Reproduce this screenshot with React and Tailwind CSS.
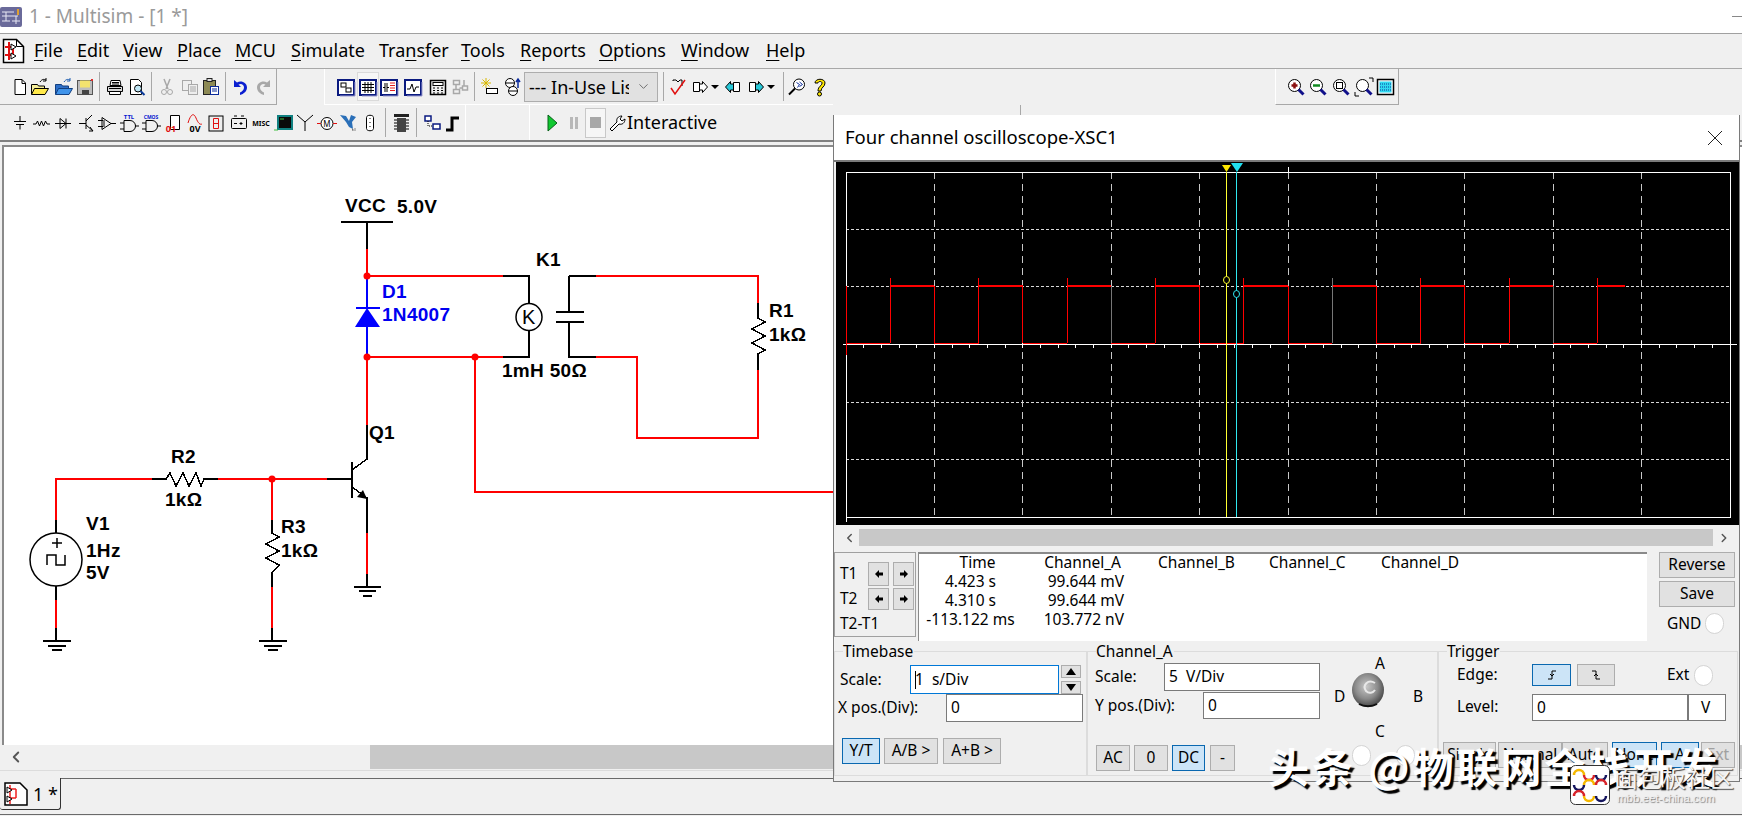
import React from "react";
import { ChevronDown, ChevronLeft, ChevronRight } from "lucide-react";

// small wrapper for the 20px toolbar pictures
function Ic({ className = "", children }) {
  return (
    <svg viewBox="0 0 20 20" className={`w-5 h-5 shrink-0 block ${className}`}>
      {children}
    </svg>
  );
}

const Sep = ({ className = "" }) => <div className={`w-px h-[29px] bg-[#a8a8a8] shrink-0 ${className}`} />;
const Drop = ({ className = "" }) => (
  <svg viewBox="0 0 8 4" className={`w-2 h-1 shrink-0 ${className}`}>
    <path d="M0 0H8L4 4z" fill="#000" />
  </svg>
);

const line = { fill: "none", stroke: "#000", strokeWidth: 1 };

const NewDoc = ({ className }) => (
  <Ic className={className}><path d="M5 2.5h7l3.5 3.5v11.5H5z" fill="#fff" stroke="#000" /><path d="M12 2.5v4h3.5" {...line} /></Ic>
);
const OpenYellow = ({ className }) => (
  <Ic className={className}>
    <path d="M1.5 7.5h6l1 1.5h6v8h-13z" fill="#f5ee9a" stroke="#000" />
    <path d="M1.5 17.5l3-6h14l-3.5 6z" fill="#ffe94a" stroke="#000" />
    <path d="M10 5c2-3 4-3 6-2M16 1v3h-3" fill="none" stroke="#000" />
  </Ic>
);
const OpenBlue = ({ className }) => (
  <Ic className={className}>
    <path d="M1.5 7.5h6l1 1.5h6v8h-13z" fill="#2d6fc8" stroke="#123f80" />
    <path d="M1.5 17.5l3-6h14l-3.5 6z" fill="#3f93ea" stroke="#123f80" />
    <path d="M10 5c2-3 4-3 6-2M16 1v3h-3" fill="none" stroke="#1c5cb0" />
  </Ic>
);
const Floppy = ({ className }) => (
  <Ic className={className}>
    <rect x="2.5" y="3.5" width="15" height="14" fill="#bdbdbd" stroke="#555" />
    <rect x="5" y="3.5" width="10" height="7" fill="#f3e36f" />
    <rect x="7" y="13" width="7" height="4.5" fill="#444" />
    <rect x="16" y="2" width="2" height="2" fill="#e03030" />
  </Ic>
);
const Printer = ({ className }) => (
  <Ic className={className}>
    <path d="M6 3.5h9l1 5H5z" fill="#fff" stroke="#000" />
    <path d="M2.5 9.5h15v5h-15z" fill="#d8d8d8" stroke="#000" />
    <path d="M4.5 14.5h11v3h-11z" fill="#fff" stroke="#000" />
    <path d="M4 11.5h12M7 5.5h7M7 7h7" stroke="#000" />
  </Ic>
);
const Preview = ({ className }) => (
  <Ic className={className}>
    <path d="M3.5 2.5h8l3 3v12h-11z" fill="#fff" stroke="#000" />
    <circle cx="11" cy="11.5" r="3.5" fill="#bfe6f5" stroke="#000" />
    <path d="M13.5 14l4 4" stroke="#0a3a9a" strokeWidth="2" />
  </Ic>
);
const Cut = ({ className }) => (
  <Ic className={className}>
    <path d="M7 2l4 10M13 2l-4 10" stroke="#a8a8a8" strokeWidth="1.5" />
    <circle cx="7" cy="15" r="2.5" fill="none" stroke="#a8a8a8" />
    <circle cx="13" cy="15" r="2.5" fill="none" stroke="#a8a8a8" />
  </Ic>
);
const Copy = ({ className }) => (
  <Ic className={className}>
    <rect x="2.5" y="3.5" width="9" height="10" fill="#eee" stroke="#a8a8a8" />
    <rect x="8.5" y="7.5" width="9" height="10" fill="#eee" stroke="#a8a8a8" />
    <path d="M10 10h6M10 12h6M10 14h6" stroke="#a8a8a8" />
  </Ic>
);
const Paste = ({ className }) => (
  <Ic className={className}>
    <rect x="2.5" y="3.5" width="12" height="14" fill="#8d8a55" stroke="#222" />
    <rect x="6" y="1.5" width="5" height="3" fill="#ddd" stroke="#222" />
    <rect x="9.5" y="9.5" width="8" height="8" fill="#fff" stroke="#0a2a9a" />
    <path d="M11 12h5M11 14h5" stroke="#0a2a9a" />
  </Ic>
);
const Undo = ({ className, color = "#0b1fd0" }) => (
  <Ic className={className}>
    <path d="M4 3v7h7L8.5 7.5C11 6 14 7.5 14 10.5c0 2.5-2 4-4 5v2.5c4-1 7-4 7-7.5C17 6 11.5 3 7 5.5z" fill={color} />
  </Ic>
);
const Box = ({ className, children }) => (
  <Ic className={className}>
    <rect x="2" y="3" width="16" height="15" fill="#fff" stroke="#0a1a80" strokeWidth="2" />
    <path d="M19 5v14H4" stroke="#9a9ad0" fill="none" />
    {children}
  </Ic>
);

function Row1Icons() {
  return (
    <>
      <NewDoc className="ml-[10px]" />
      <OpenYellow />
      <OpenBlue className="ml-[4px]" />
      <Floppy className="ml-[1px]" />
      <Sep className="ml-[4px]" />
      <Printer className="ml-[5px]" />
      <Preview className="ml-[2px]" />
      <Sep className="ml-[4px]" />
      <Cut className="ml-[5px]" />
      <Copy className="ml-[3px]" />
      <Paste className="ml-[1px]" />
      <Sep className="ml-[4px]" />
      <Undo className="ml-[4px]" />
      <Undo className="ml-[4px] -scale-x-100" color="#a8a8a8" />
    </>
  );
}

function Row1Middle() {
  return (
    <>
      <Box className="ml-[11px]">
        <rect x="5" y="6" width="5" height="4" fill="#fff" stroke="#000" />
        <rect x="10" y="11" width="5" height="4" fill="#fff" stroke="#000" />
      </Box>
      <div className="ml-[1px] w-[22px] h-[29px] border border-[#dadada] bg-[#f6f6f6] flex items-center justify-center shrink-0">
        <Box>
          <path d="M4 7.5h12M4 10.5h12M4 13.5h12M7 5v11M10 5v11M13 5v11" stroke="#000" />
        </Box>
      </div>
      <Box>
        <path d="M6 6v9M8 6v9M4 10.5h2M8 10.5h2" stroke="#000" />
        <path d="M11 6h5M11 8.5h5M11 11h5M11 13.5h5" stroke="#e02020" />
      </Box>
      <Box className="ml-[4px]">
        <path d="M4 12h3l2-5 2 8 2-5h3" fill="none" stroke="#000" />
      </Box>
      <Ic className="ml-[5px]">
        <rect x="2.5" y="3.5" width="15" height="14" fill="#eee" stroke="#000" strokeWidth="1.5" />
        <rect x="5" y="5.5" width="10" height="3" fill="#fff" stroke="#000" />
        <path d="M5 11h2M9 11h2M13 11h2M5 13.5h2M9 13.5h2M13 13.5h2M5 16h2M9 16h2M13 16h2" stroke="#000" />
      </Ic>
      <Ic className="ml-[2px]">
        <path d="M3.5 3.5h6v4h-6zM3.5 12.5h6v4h-6zM12.5 9h5v4h-5zM6 7.5v5M9.5 11h3M14 3v6" fill="none" stroke="#a8a8a8" strokeWidth="1.5" />
      </Ic>
      <Sep className="ml-[4px]" />
      <Ic className="ml-[5px]">
        <path d="M6 1v10M1 6h10M2.5 2.5l7 7M9.5 2.5l-7 7" stroke="#d8b800" />
        <rect x="6.5" y="11.5" width="11" height="5" fill="#fff" stroke="#000" />
      </Ic>
      <Ic className="ml-[3px]">
        <circle cx="7" cy="6" r="4.5" fill="#fff" stroke="#000" />
        <circle cx="10" cy="14" r="4.5" fill="#fff" stroke="#000" />
        <path d="M3 6h8M6 14h8" stroke="#000" />
        <path d="M15 11V3M13 5l2-3 2 3" fill="none" stroke="#0a2a9a" strokeWidth="1.5" />
      </Ic>
      <div className="ml-[1px] w-[134px] h-[30px] bg-[#e1e1e1] border border-[#adadad] flex items-center pl-[4px] shrink-0">
        <span className="w-[100px] overflow-hidden whitespace-nowrap text-[18px] leading-none">--- In-Use Lis</span>
        <ChevronDown size={15} strokeWidth={1.5} className="ml-[7px] text-[#666]" />
      </div>
      <Sep className="ml-[5px]" />
      <Ic className="ml-[4px]">
        <path d="M5 4V3h3l2 2 2-2h2v6" fill="none" stroke="#000" />
        <path d="M3 11l4 6L17 3" fill="none" stroke="#e01010" strokeWidth="1.5" />
      </Ic>
      <Ic className="ml-[2px]">
        <path d="M3.5 5.5h6v9h-6z" fill="#fff" stroke="#000" />
        <path d="M9.5 7h3V4.5l5 5.5-5 5.5V13h-3z" fill="#fff" stroke="#000" />
      </Ic>
      <Drop className="ml-[1px]" />
      <Ic className="ml-[4px]">
        <path d="M10.5 5.5h6v9h-6z" fill="#fff" stroke="#000" />
        <path d="M10.5 7h-3V4.5l-5 5.5 5 5.5V13h3z" fill="#28c8d8" stroke="#000" />
      </Ic>
      <Ic className="ml-[3px]">
        <path d="M3.5 5.5h6v9h-6z" fill="#fff" stroke="#000" />
        <path d="M9.5 7h3V4.5l5 5.5-5 5.5V13h-3z" fill="#28c8d8" stroke="#000" />
      </Ic>
      <Drop className="ml-[1px]" />
      <Sep className="ml-[8px]" />
      <Ic className="ml-[3px]">
        <circle cx="12" cy="7.5" r="5.5" fill="#fff" stroke="#000" />
        <path d="M9.5 5.5l3 2-2 3M12.5 5l3 2.5-3 2" fill="none" stroke="#0a2a9a" />
        <path d="M8 11.5l-6 6" stroke="#000" strokeWidth="2" />
      </Ic>
      <Ic className="ml-[3px]">
        <path d="M5 6c0-5 10-5 10 0 0 4-4 4-4 8H8c0-5 4-5 4-8 0-2-4-2-4 0z" fill="#ffe800" stroke="#000" />
        <circle cx="9.5" cy="17" r="2" fill="#ffe800" stroke="#000" />
      </Ic>
    </>
  );
}

function Row2Left() {
  return (
    <>
      <Ic className="ml-[10px]"><path d="M10 3v5M4 8.5h12M6 11.5h8M10 11.5v5" stroke="#000" /></Ic>
      <Ic className="ml-[1px]"><path d="M2 11h3l1.5-3 2 5 2-5 2 5 2-5 1.5 3h3" {...line} /></Ic>
      <Ic className="ml-[2px]"><path d="M2 10.5h16M7 5.5l6 5-6 5zM13 5.5v10" {...line} /></Ic>
      <Ic className="ml-[4px]"><path d="M2 10.5h7M9 5v11M15 2L9 8M9 12l7 6M13 14l3 4-4 0" {...line} /></Ic>
      <Ic><path d="M1 7.5h5M1 13.5h5M5 4.5v12l9-6zM14 10.5h5M7 7v7" {...line} /></Ic>
      <Ic className="ml-[2px]">
        <text x="10" y="6" textAnchor="middle" className="text-[6px] font-bold fill-[#0a1ad0]">TTL</text>
        <path d="M1 10h4M1 16h4M5 7.5h6a5.5 5.5 0 0 1 0 11H5zM16 13h4" {...line} />
      </Ic>
      <Ic className="ml-[2px]">
        <text x="10" y="6" textAnchor="middle" className="text-[5px] font-bold fill-[#0a1ad0]">CMOS</text>
        <path d="M1 10h4M1 16h4M5 7.5h6a5.5 5.5 0 0 1 0 11H5zM16 13h4" {...line} />
      </Ic>
      <Ic className="ml-[2px]">
        <path d="M7.5 2.5h9v14h-9z" fill="#fff" stroke="#000" />
        <text x="8" y="19" textAnchor="middle" className="text-[9px] font-bold fill-[#e01010]">01</text>
      </Ic>
      <Ic className="ml-[2px]">
        <path d="M3 10C6 0 9 0 11 5c2 5 4 7 6 6" fill="none" stroke="#e01010" />
        <text x="10" y="19" textAnchor="middle" className="text-[9px] font-bold fill-black">0V</text>
      </Ic>
      <Ic className="ml-[1px]">
        <rect x="3" y="3" width="14" height="15" fill="#eee" stroke="#000" />
        <path d="M7.5 5.5h5v10h-5zM7.5 10.5h5" fill="none" stroke="#e01010" />
      </Ic>
      <Ic className="ml-[3px]">
        <rect x="2.5" y="5.5" width="15" height="10" rx="1" fill="#eee" stroke="#000" />
        <path d="M5 3h3M12 3h3M5 10.5h3M12 9v3M10.5 10.5h3" stroke="#000" />
      </Ic>
      <Ic className="ml-[2px]">
        <text x="10" y="13" textAnchor="middle" className="text-[7px] font-bold fill-black">MISC</text>
      </Ic>
      <Ic className="ml-[3px]">
        <rect x="4" y="3" width="14" height="13" fill="#0a0a0a" stroke="#108080" strokeWidth="2" />
        <path d="M6 6h4M0 17h4" stroke="#40c040" />
      </Ic>
      <Ic className="ml-[1px]"><path d="M10 9v9M2 2l8 7 8-7" {...line} /></Ic>
      <Ic className="ml-[2px]">
        <circle cx="10" cy="10.5" r="6" fill="#fff" stroke="#000" />
        <text x="10" y="13.5" textAnchor="middle" className="text-[8px] fill-black">M</text>
        <path d="M0 10.5h4M16 10.5h4" stroke="#e01010" />
      </Ic>
      <Ic className="ml-[2px]">
        <path d="M1 2l6 1 3 5 2-6 5 2-4 5 1 7-4-2-3-5z" fill="#2a6fb8" />
        <path d="M13 16h1v2M16 15v3" stroke="#888" />
      </Ic>
      <Ic className="ml-[1px]">
        <path d="M6.5 4.5c0-3 7-3 7 0v11c0 3-7 3-7 0z" fill="#fff" stroke="#000" />
        <path d="M10 5v1M10 9v1M10 13v1" stroke="#000" />
      </Ic>
      <Sep className="ml-[5px]" />
      <Ic className="ml-[5px]">
        <rect x="6" y="5" width="9" height="14" fill="#444" />
        <path d="M3 7h3M3 10h3M3 13h3M3 16h3M15 7h3M15 10h3M15 13h3M15 16h3" stroke="#000" />
        <rect x="3" y="1" width="15" height="3" fill="#222" />
      </Ic>
      <Sep className="ml-[5px]" />
      <Ic className="ml-[5px]">
        <rect x="3" y="3" width="6" height="5" fill="#fff" stroke="#0a1a80" strokeWidth="1.5" />
        <rect x="11" y="11" width="7" height="5" fill="#fff" stroke="#0a1a80" strokeWidth="1.5" />
        <path d="M6 8v5h5" fill="none" stroke="#000" strokeDasharray="1 1" />
      </Ic>
      <Ic className="ml-[1px]"><path d="M3 17h6V5h7" fill="none" stroke="#000" strokeWidth="3" /></Ic>
    </>
  );
}

function Row2Sim() {
  return (
    <>
      <Ic className="ml-[12px]"><path d="M6 2l9 8-9 8z" fill="#10c830" stroke="#066018" /></Ic>
      <Ic className="ml-[2px]"><path d="M6 4h3v12H6zM11 4h3v12h-3z" fill="#b8b8b8" /></Ic>
      <div className="ml-[1px] w-[21px] h-[30px] border border-[#c8c8c8] bg-[#f6f6f6] flex items-center justify-center shrink-0">
        <div className="w-[11px] h-[11px] bg-[#a8a8a8]" />
      </div>
      <svg viewBox="0 0 18 20" className="w-[18px] h-5 ml-[2px] shrink-0">
        <path d="M2 16l7-7c-1-3 1-6 5-6l-2 3 2 2 3-2c0 4-3 6-6 5l-7 7z" fill="#fff" stroke="#000" />
      </svg>
      <span className="ml-[1px] -mt-[2px] text-[18px] leading-none whitespace-nowrap">Interactive</span>
    </>
  );
}

function ZoomGlass({ children }) {
  return (
    <Ic>
      <circle cx="8.5" cy="8.5" r="6" fill="#fff" stroke="#000" />
      {children}
      <path d="M12.5 12.5l5 5" stroke="#10108a" strokeWidth="3" />
    </Ic>
  );
}

const menus = [
  ["", "F", "ile", "w-[43px]"],
  ["", "E", "dit", "w-[46px]"],
  ["", "V", "iew", "w-[54px]"],
  ["", "P", "lace", "w-[58px]"],
  ["", "M", "CU", "w-[56px]"],
  ["", "S", "imulate", "w-[88px]"],
  ["Tra", "n", "sfer", "w-[82px]"],
  ["", "T", "ools", "w-[59px]"],
  ["", "R", "eports", "w-[79px]"],
  ["", "O", "ptions", "w-[82px]"],
  ["", "W", "indow", "w-[85px]"],
  ["", "H", "elp", "w-[40px]"],
];

function Schematic() {
  const red =
    "M367 249V276H503M596 276H758V303M758 370V438H637V357H596M367 357H503M475 357V492H834M367 357V425M367 533V574M218 479H327M56 520V479H152M272 479V520M56 600V628M272 587V628";
  const black =
    "M341 222H393M367 222V249M503 276H529V304M529 331V357H503M569 276H596M569 276V312M556 312H584M556 322H584M569 322V357H596M758 303V318L765 322L752 329L765 336L752 343L765 350L758 354V370M367 425V459L352 470M352 462V498M352 487L367 498V533M327 479H352M367 574V587M354 587H381M359 591H376M363 596H372M152 479H166L170 473L176 486L183 473L189 486L196 473L201 486L204 479H218M56 520V533M56 586V600M56 628V641M43 641H71M48 646H66M52 650H62M272 520V533L279 537L266 544L279 551L266 558L279 565L272 573V587M272 628V641M259 641H287M264 646H282M268 650H278";
  const labels = [
    ["VCC", 345, 212],
    ["5.0V", 397, 213],
    ["K1", 536, 266],
    ["1mH 50Ω", 502, 377],
    ["R1", 769, 317],
    ["1kΩ", 769, 341],
    ["Q1", 369, 439],
    ["R2", 171, 463],
    ["1kΩ", 165, 506],
    ["V1", 86, 530],
    ["1Hz", 86, 557],
    ["5V", 86, 579],
    ["R3", 281, 533],
    ["1kΩ", 281, 557],
  ];
  return (
    <svg viewBox="4 147 831 598" className="w-[831px] h-[598px] block">
      <g shapeRendering="crispEdges">
        <path d={red} fill="none" stroke="#f00" strokeWidth="2" />
        <path d={black} fill="none" stroke="#000" strokeWidth="1.5" />
        <path d="M367 276V308M367 327V357M356 308H380" fill="none" stroke="#00f" strokeWidth="2" />
      </g>
      <path d="M367 308L355 327H380z" fill="#00f" />
      <path d="M367 499L357 497L363 490z" fill="#000" />
      <ellipse cx="529" cy="317" rx="13" ry="13.5" fill="#fff" stroke="#000" strokeWidth="1.5" />
      <ellipse cx="56" cy="559.5" rx="26" ry="26.5" fill="none" stroke="#000" strokeWidth="1.5" />
      <path d="M52 543H62M57 538V548M47 565V555H56V565H65V555" fill="none" stroke="#000" strokeWidth="1.5" />
      <text x="522" y="324" className="text-[20px] fill-black font-['Liberation_Sans',sans-serif]">K</text>
      {[[367, 276], [367, 357], [475, 357], [272, 479]].map(([x, y]) => (
        <circle key={`${x}-${y}`} cx={x} cy={y} r="3.5" fill="#f00" />
      ))}
      {labels.map(([t, x, y]) => (
        <text key={`${t}-${x}`} x={x} y={y} className="text-[19px] tracking-[0.3px] font-bold fill-black font-['Liberation_Sans',sans-serif]">
          {t}
        </text>
      ))}
      <text x="382" y="298" className="text-[19px] tracking-[0.3px] font-bold fill-[#0000f0] font-['Liberation_Sans',sans-serif]">D1</text>
      <text x="382" y="321" className="text-[19px] tracking-[0.3px] font-bold fill-[#0000f0] font-['Liberation_Sans',sans-serif]">1N4007</text>
    </svg>
  );
}

function ScopeScreen() {
  const verts = [934.4, 1022.8, 1111.2, 1199.6, 1288, 1376.4, 1464.8, 1553.2, 1641.6];
  const horiz = [229, 286, 402, 459];
  const ticks = Array.from({ length: 51 }, (_, i) => 846 + i * 17.68);
  const rises = [890.2, 978.6, 1067, 1155.4, 1243.8, 1332.2, 1420.6, 1509, 1597.4];
  const falls = [934.4, 1022.8, 1111.2, 1199.6, 1288, 1376.4, 1464.8, 1553.2];
  const dimmed = [1111.2, 1332.2, 1553.2];
  const tone = (x) => (dimmed.includes(x) ? "#777" : "#f00");
  return (
    <svg viewBox="836 162 903 363" className="w-[903px] h-[363px] block">
      <rect x="836" y="162" width="903" height="363" fill="#000" />
      <g shapeRendering="crispEdges">
        {verts.map((x) => (
          <path key={x} d={`M${x} 172V517`} stroke="#c8c8c8" strokeDasharray="7 5" />
        ))}
        {horiz.map((y) => (
          <path key={y} d={`M846 ${y}H1730`} stroke="#d8d8d8" strokeDasharray="3 2" />
        ))}
        <rect x="846.5" y="172.5" width="883.5" height="344.5" fill="none" stroke="#fff" />
        <path d="M1288 167V172M846 517V522" stroke="#fff" />
        <path d="M843 344.5H1737" stroke="#fff" />
        {ticks.map((x, i) => (
          <path key={x} d={`M${x} ${i % 5 === 0 ? 341 : 344}V348`} stroke="#fff" />
        ))}
        {/* low and high stretches of the square wave */}
        {rises.map((x, i) => (
          <path key={x} d={`M${i === 0 ? 846 : falls[i - 1]} 343H${x}`} stroke="#f00" />
        ))}
        {rises.map((x, i) => (
          <path key={x} d={`M${x} 286H${falls[i] || 1625}`} stroke="#f00" strokeWidth="2" />
        ))}
        {rises.map((x) => (
          <path key={x} d={`M${x} 278V343`} stroke={tone(x)} />
        ))}
        {falls.map((x) => (
          <path key={x} d={`M${x} 286V343`} stroke={tone(x)} />
        ))}
        <path d="M846.5 286V355" stroke="#f00" />
        <path d="M1226.5 172V517" stroke="#ffff30" />
        <path d="M1236.5 172V517" stroke="#30e8f0" />
      </g>
      <path d="M1222 165H1231L1226.5 172z" fill="#ffe800" />
      <path d="M1231 163H1243L1237 172z" fill="#20e0f0" />
      <ellipse cx="1226.5" cy="280" rx="3" ry="3.5" fill="#000" stroke="#ffff30" />
      <ellipse cx="1236.5" cy="294" rx="3" ry="3.5" fill="#000" stroke="#30e8f0" />
    </svg>
  );
}

function Btn({ children, className = "", active, dim }) {
  return (
    <div
      className={`flex items-center justify-center shrink-0 border text-[15.5px] leading-none ${
        active ? "bg-[#cce4f7] border-[#0a68b0]" : "bg-[#e1e1e1] border-[#adadad]"
      } ${dim ? "text-[#a0a0a0]" : "text-black"} ${className}`}
    >
      {children}
    </div>
  );
}

function Field({ children, className = "" }) {
  return (
    <div className={`bg-white border border-[#7a7a7a] flex items-center pl-[4px] text-[15.5px] leading-none whitespace-pre shrink-0 ${className}`}>
      {children}
    </div>
  );
}

const Radio = ({ className = "" }) => (
  <div className={`w-[19px] h-[21px] rounded-full bg-white border border-[#d4d4d4] shrink-0 ${className}`} />
);

const Arrow = ({ flip }) => (
  <svg viewBox="0 0 10 10" className={`w-[10px] h-[10px] ${flip ? "-scale-x-100" : ""}`}>
    <path d="M1 5l4-4v2.5h4v3H5V9z" fill="#000" />
  </svg>
);

function Group({ label, className = "", children }) {
  return (
    <div className={`relative h-[125px] border border-[#dcdcdc] shrink-0 ${className}`}>
      <span className="absolute -top-[11px] left-[8px] bg-[#f0f0f0] leading-[20px] pr-[1px]">{label}</span>
      {children}
    </div>
  );
}

function Knob() {
  return (
    <svg viewBox="0 0 34 36" className="w-[34px] h-[36px] ml-[7px] shrink-0">
      <defs>
        <radialGradient id="knobFill" cx="45%" cy="40%" r="65%">
          <stop offset="0%" stopColor="#c8c8c8" />
          <stop offset="55%" stopColor="#8a8a8a" />
          <stop offset="100%" stopColor="#3a3a3a" />
        </radialGradient>
      </defs>
      <ellipse cx="17" cy="18" rx="16" ry="17" fill="url(#knobFill)" />
      <path d="M24 11c-7-4-13 2-9 8 3 3 7 2 9-1" fill="none" stroke="#e8e8e8" strokeWidth="2" />
      <path d="M8 32c5 3 13 3 18 0" fill="none" stroke="#111" strokeWidth="2" />
    </svg>
  );
}

function Scope() {
  return (
    <div className="absolute left-[833px] top-[115px] w-[907px] h-[667px] bg-[#f0f0f0] border-l border-b border-r border-[#7a7a7a] text-[15.5px]">
      {/* title */}
      <div className="h-[45px] bg-white flex items-center justify-between pl-[11px] pr-[16px]">
        <span className="text-[18.5px] leading-none whitespace-nowrap">Four channel oscilloscope-XSC1</span>
        <svg viewBox="0 0 16 16" className="w-4 h-4">
          <path d="M1 1l14 14M15 1L1 15" stroke="#222" strokeWidth="1" />
        </svg>
      </div>

      {/* screen */}
      <div className="h-[365px] border-t-2 border-[#7a7a7a] pl-[2px]">
        <ScopeScreen />
      </div>

      {/* horizontal scrollbar */}
      <div className="mt-[4px] h-[17px] flex items-center">
        <ChevronLeft size={14} strokeWidth={2.5} className="ml-[6px] w-[19px] text-[#555]" />
        <div className="w-[854px] h-[17px] bg-[#c8c8c8]" />
        <ChevronRight size={14} strokeWidth={2.5} className="ml-[4px] text-[#555]" />
      </div>

      {/* cursors and read-out */}
      <div className="mt-[6px] h-[89px] flex items-start">
        <div className="w-[82px] h-[85px] border border-[#a0a0a0] pl-[5px] pt-[9px] shrink-0">
          <div className="flex items-center h-[24px]">
            <span className="w-[28px]">T1</span>
            <Btn className="w-[21px] h-[24px]"><Arrow /></Btn>
            <Btn className="w-[21px] h-[24px] ml-[4px]"><Arrow flip /></Btn>
          </div>
          <div className="flex items-center h-[22px] mt-[2px]">
            <span className="w-[28px]">T2</span>
            <Btn className="w-[21px] h-[22px]"><Arrow /></Btn>
            <Btn className="w-[21px] h-[22px] ml-[4px]"><Arrow flip /></Btn>
          </div>
          <div className="mt-[3px] h-[20px] leading-[20px] whitespace-nowrap">T2-T1</div>
        </div>

        <div className="ml-[2px] w-[729px] h-[89px] bg-white border-t-2 border-l border-[#8a8a8a] flex leading-[19px] whitespace-nowrap shrink-0">
          <div className="w-[113px] text-center">
            <div className="pl-[4px] -mt-px">Time</div>
            <div className="pr-[10px]">4.423 s</div>
            <div className="pr-[10px]">4.310 s</div>
            <div className="pr-[10px]">-113.122 ms</div>
          </div>
          <div className="w-[95px] text-right">
            <div className="pr-[6px] -mt-px">Channel_A</div>
            <div className="pr-[3px]">99.644 mV</div>
            <div className="pr-[3px]">99.644 mV</div>
            <div className="pr-[3px]">103.772 nV</div>
          </div>
          <div className="w-[111px] pl-[31px] -mt-px">Channel_B</div>
          <div className="w-[112px] pl-[31px] -mt-px">Channel_C</div>
          <div className="pl-[31px] -mt-px">Channel_D</div>
        </div>

        <div className="ml-[12px] w-[76px] shrink-0">
          <Btn className="w-[76px] h-[26px]">Reverse</Btn>
          <Btn className="w-[76px] h-[26px] mt-[3px]">Save</Btn>
          <div className="mt-[5px] flex items-center pl-[8px]">
            <span className="w-[38px]">GND</span>
            <Radio />
          </div>
        </div>
      </div>

      {/* control groups */}
      <div className="mt-[10px] flex">
        <Group label="Timebase" className="w-[253px]">
          <div className="pt-[13px] flex h-[42px] items-center">
            <span className="w-[75px] pl-[5px]">Scale:</span>
            <Field className="w-[149px] h-[29px] border-[#0078d7]">
              <span className="w-px h-[18px] bg-black -mr-px" />1  s/Div
            </Field>
            <div className="ml-[2px] w-[20px] h-[29px] flex flex-col justify-between">
              <Btn className="h-[13px]"><span className="w-0 h-0 border-x-[5px] border-x-transparent border-b-[7px] border-b-black" /></Btn>
              <Btn className="h-[13px]"><span className="w-0 h-0 border-x-[5px] border-x-transparent border-t-[7px] border-t-black" /></Btn>
            </div>
          </div>
          <div className="flex items-center h-[28px]">
            <span className="w-[111px] pl-[3px] whitespace-nowrap">X pos.(Div):</span>
            <Field className="w-[137px] h-[28px]">0</Field>
          </div>
          <div className="mt-[16px] pl-[7px] flex">
            <Btn active className="w-[38px] h-[26px]">Y/T</Btn>
            <Btn className="w-[54px] h-[26px] ml-[4px]">A/B &gt;</Btn>
            <Btn className="w-[58px] h-[26px] ml-[5px]">A+B &gt;</Btn>
          </div>
        </Group>

        <Group label="Channel_A" className="w-[351px] flex">
          <div className="w-[232px] shrink-0">
            <div className="mt-[11px] flex items-center h-[28px]">
              <span className="w-[76px] pl-[7px]">Scale:</span>
              <Field className="w-[156px] h-[28px]">5  V/Div</Field>
            </div>
            <div className="mt-[1px] flex items-center h-[27px]">
              <span className="w-[115px] pl-[7px] whitespace-nowrap">Y pos.(Div):</span>
              <Field className="w-[117px] h-[27px]">0</Field>
            </div>
            <div className="mt-[26px] pl-[8px] flex">
              <Btn className="w-[34px] h-[26px]">AC</Btn>
              <Btn className="w-[34px] h-[26px] ml-[4px]">0</Btn>
              <Btn active className="w-[33px] h-[26px] ml-[4px]">DC</Btn>
              <Btn className="w-[25px] h-[26px] ml-[5px]">-</Btn>
            </div>
          </div>
          <div className="w-[110px] shrink-0">
            <div className="mt-[2px] h-[18px] leading-[18px] ml-[55px]">A</div>
            <div className="flex h-[34px] items-start">
              <span className="ml-[14px] mt-[14px] w-[10px] leading-[20px]">D</span>
              <Knob />
              <span className="ml-[28px] mt-[14px] leading-[20px]">B</span>
            </div>
            <div className="mt-[15px] h-[20px] leading-[20px] ml-[55px]">C</div>
            <div className="mt-[4px] flex ml-[32px]">
              <Radio />
              <Radio className="ml-[25px]" />
            </div>
          </div>
        </Group>

        <Group label="Trigger" className="w-[300px]">
          <div className="mt-[12px] flex items-center h-[22px]">
            <span className="w-[93px] pl-[18px]">Edge:</span>
            <Btn active className="w-[39px] h-[22px]">
              <svg viewBox="0 0 12 12" className="w-3 h-3"><path d="M2 10h4V2h4M6 7L4 5M6 7l2-2" fill="none" stroke="#000" /></svg>
            </Btn>
            <Btn className="w-[38px] h-[22px] ml-[6px]">
              <svg viewBox="0 0 12 12" className="w-3 h-3"><path d="M2 2h4v8h4M6 5L4 7M6 5l2 2" fill="none" stroke="#000" /></svg>
            </Btn>
            <span className="ml-[52px] w-[27px]">Ext</span>
            <Radio />
          </div>
          <div className="mt-[8px] flex items-center h-[27px]">
            <span className="w-[93px] pl-[18px] -mt-[2px]">Level:</span>
            <Field className="w-[156px] h-[27px]">0</Field>
            <Field className="w-[38px] h-[27px] pl-[12px]">V</Field>
          </div>
          <div className="mt-[21px] pl-[4px] flex">
            <Btn className="w-[53px] h-[26px]">Single</Btn>
            <Btn className="w-[64px] h-[26px] ml-[2px]">Normal</Btn>
            <Btn className="w-[46px] h-[26px]">Auto</Btn>
            <Btn active className="w-[45px] h-[26px] ml-[4px]">None</Btn>
            <Btn active className="w-[38px] h-[26px] ml-[4px]">A</Btn>
            <Btn dim className="w-[34px] h-[26px] ml-[2px]">Ext</Btn>
          </div>
        </Group>
      </div>
    </div>
  );
}

function Watermark() {
  const arcs = [
    ["M4 10a5 5 0 0 1 10 0", "#f5b800"],
    ["M14 10a5 5 0 0 0 10 0", "#d8232a"],
    ["M26 10a5 5 0 0 0 10 0", "#15155e"],
    ["M4 20a5 5 0 0 0 10 0", "#15155e"],
    ["M14 20a5 5 0 0 1 10 0", "#f5b800"],
    ["M26 20a5 5 0 0 1 10 0", "#d8232a"],
    ["M4 31a5 5 0 0 1 10 0", "#d8232a"],
    ["M14 31a5 5 0 0 0 10 0", "#f5b800"],
    ["M26 31a5 5 0 0 0 10 0", "#15155e"],
  ];
  return (
    <>
      <div className="absolute left-[1268px] top-[740px] text-[41px] leading-[50px] font-bold tracking-[3px] whitespace-nowrap text-white [text-shadow:3px_3px_1px_#000] font-['Noto_Sans_CJK_SC',sans-serif]">
        头条 @物联网全栈开发
      </div>
      <svg viewBox="0 0 40 40" className="absolute left-[1570px] top-[765px] w-10 h-10">
        <rect x="0.5" y="0.5" width="39" height="39" rx="5" fill="#fff" stroke="#333" />
        {arcs.map(([d, c]) => (
          <path key={d} d={d} fill="none" stroke={c} strokeWidth="2.5" />
        ))}
      </svg>
      <div className="absolute left-[1614px] top-[762px] text-[24px] leading-[30px] whitespace-nowrap text-[#f4f4f4] [text-shadow:1px_1px_1px_#444] font-['Noto_Sans_CJK_SC',sans-serif]">
        面包板社区
      </div>
      <div className="absolute left-[1617px] top-[791px] text-[11.5px] leading-[14px] whitespace-nowrap text-[#f0f0f0] [text-shadow:1px_1px_1px_#777] font-['Liberation_Sans',sans-serif]">
        mbb.eet-china.com
      </div>
    </>
  );
}

export default function App() {
  return (
    <div className="w-[1747px] h-[816px] bg-white overflow-hidden font-['Noto_Sans','Noto_Sans_CJK_SC',sans-serif]">
      <div className="relative w-[1742px] h-[816px] bg-[#f0f0f0] flex flex-col">
        {/* title bar */}
        <div className="h-[34px] shrink-0 bg-white border-b border-[#a0a0a0] flex items-center">
          <svg viewBox="0 0 22 22" className="w-[22px] h-[22px] shrink-0">
            <rect x="0" y="1" width="22" height="20" rx="2" fill="#6a6a9a" />
            <path d="M2 6h12M2 10h16M2 15h8M12 15h8M6 6v9M16 10v8" stroke="#e8e8f4" />
            <path d="M18 3v6" stroke="#e0a030" strokeWidth="2" />
          </svg>
          <span className="ml-[7px] text-[19px] leading-none text-[#9a9a9a] whitespace-nowrap">1 - Multisim - [1 *]</span>
          <div className="ml-auto w-[10px] h-px bg-[#888]" />
        </div>

        {/* menu */}
        <div className="h-[34px] shrink-0 flex items-center">
          <svg viewBox="0 0 24 26" className="ml-[2px] w-6 h-[26px] shrink-0">
            <path d="M1.5 1.5h13l7 7v16h-20z" fill="#fff" stroke="#000" strokeWidth="1.5" />
            <path d="M14.5 1.5v7h7" fill="none" stroke="#000" />
            <path d="M7 4v18M3 9h8M3 17h8M11 9v8" stroke="#e01010" strokeWidth="2" />
            <path d="M9 6l5 3-5 3zM9 15l5 3-5 3z" fill="#fff" stroke="#000" />
          </svg>
          <div className="ml-[8px] -mt-[2px] flex text-[18px] leading-none whitespace-nowrap">
            {menus.map(([pre, key, post, w]) => (
              <span key={key + post} className={w}>
                {pre}
                <span className="underline underline-offset-[3px]">{key}</span>
                {post}
              </span>
            ))}
          </div>
        </div>

        {/* standard toolbars */}
        <div className="h-[37px] shrink-0 flex border-t border-[#a8a8a8]">
          <div className="w-[277px] h-[36px] flex items-center border-r border-b border-[#a8a8a8] shrink-0">
            <Row1Icons />
          </div>
          <div className="ml-[47px] w-[509px] h-[36px] flex items-center border-l border-white border-b-white border-b shrink-0">
            <Row1Middle />
          </div>
          <div className="ml-[442px] w-[124px] h-[36px] flex items-center pl-[10px] gap-[2px] border-l border-white border-r border-b border-r-[#a8a8a8] border-b-[#a8a8a8] shrink-0">
            <ZoomGlass><path d="M5.5 8.5h6M8.5 5.5v6" stroke="#8a1010" strokeWidth="2.5" /></ZoomGlass>
            <ZoomGlass><path d="M5 8.5h7" stroke="#108a20" strokeWidth="2.5" /></ZoomGlass>
            <div className="ml-[1px]"><ZoomGlass><rect x="5.5" y="5.5" width="6" height="6" fill="none" stroke="#000" /></ZoomGlass></div>
            <div className="ml-[1px]"><ZoomGlass><path d="M15 1h4v4M1 15v4h4" fill="none" stroke="#000" /></ZoomGlass></div>
            <Ic>
              <rect x="1.5" y="2.5" width="16" height="15" fill="#fff" stroke="#000" strokeWidth="1.5" />
              <rect x="3.5" y="4.5" width="12" height="11" fill="#30d8f0" />
              <path d="M4 7h11M4 10h11M4 13h11" stroke="#0a3a9a" strokeDasharray="1 1" />
            </Ic>
          </div>
        </div>

        <div className="h-[37px] shrink-0 flex border-b-2 border-[#808080]">
          <div className="w-[466px] h-[35px] flex items-center border-r border-white shrink-0">
            <Row2Left />
          </div>
          <div className="w-[64px] h-[35px] border-r border-white shrink-0" />
          <div className="w-[301px] h-[35px] flex items-center shrink-0">
            <Row2Sim />
          </div>
          <div className="w-[190px] h-[35px] border-r border-[#a8a8a8] shrink-0" />
        </div>

        <div className="h-[3px] shrink-0" />

        {/* circuit canvas */}
        <div className="h-[600px] ml-[2px] shrink-0 bg-white border-l-2 border-t-2 border-[#8a8a8a] overflow-hidden">
          <Schematic />
        </div>

        {/* canvas scrollbar */}
        <div className="h-[24px] shrink-0 flex ml-[4px] items-center">
          <div className="w-[366px] h-[24px] flex items-center">
            <ChevronLeft size={18} strokeWidth={2.5} className="ml-[3px] text-[#555]" />
          </div>
          <div className="flex-1 h-[24px] bg-[#c8c8c8]" />
        </div>
        <div className="h-[8px] shrink-0 border-t border-[#dcdcdc] mt-[1px] -mb-px" />

        {/* sheet tabs */}
        <div className="h-[37px] shrink-0 border-t border-b border-[#6a6a6a] mt-px">
          <div className="relative -mt-px w-[61px] h-[32px] bg-[#f0f0f0] border-r border-b border-[#333] rounded-br-[3px] rounded-bl-[3px] flex items-center pl-[4px]">
            <svg viewBox="0 0 24 24" className="w-6 h-6 shrink-0">
              <path d="M1 1h15l7 7v15H1z" fill="#fff" stroke="#000" strokeWidth="1.5" />
              <path d="M6 3v19M12 7v9M6 7h6M6 16h6" stroke="#f02020" strokeWidth="1.5" />
              <path d="M3 5l5 3-5 3zM3 14l5 3-5 3z" fill="#fff" stroke="#000" />
            </svg>
            <span className="ml-[5px] text-[18px] leading-none whitespace-pre">1 *</span>
          </div>
        </div>

        <Scope />
        <Watermark />
      </div>
    </div>
  );
}
